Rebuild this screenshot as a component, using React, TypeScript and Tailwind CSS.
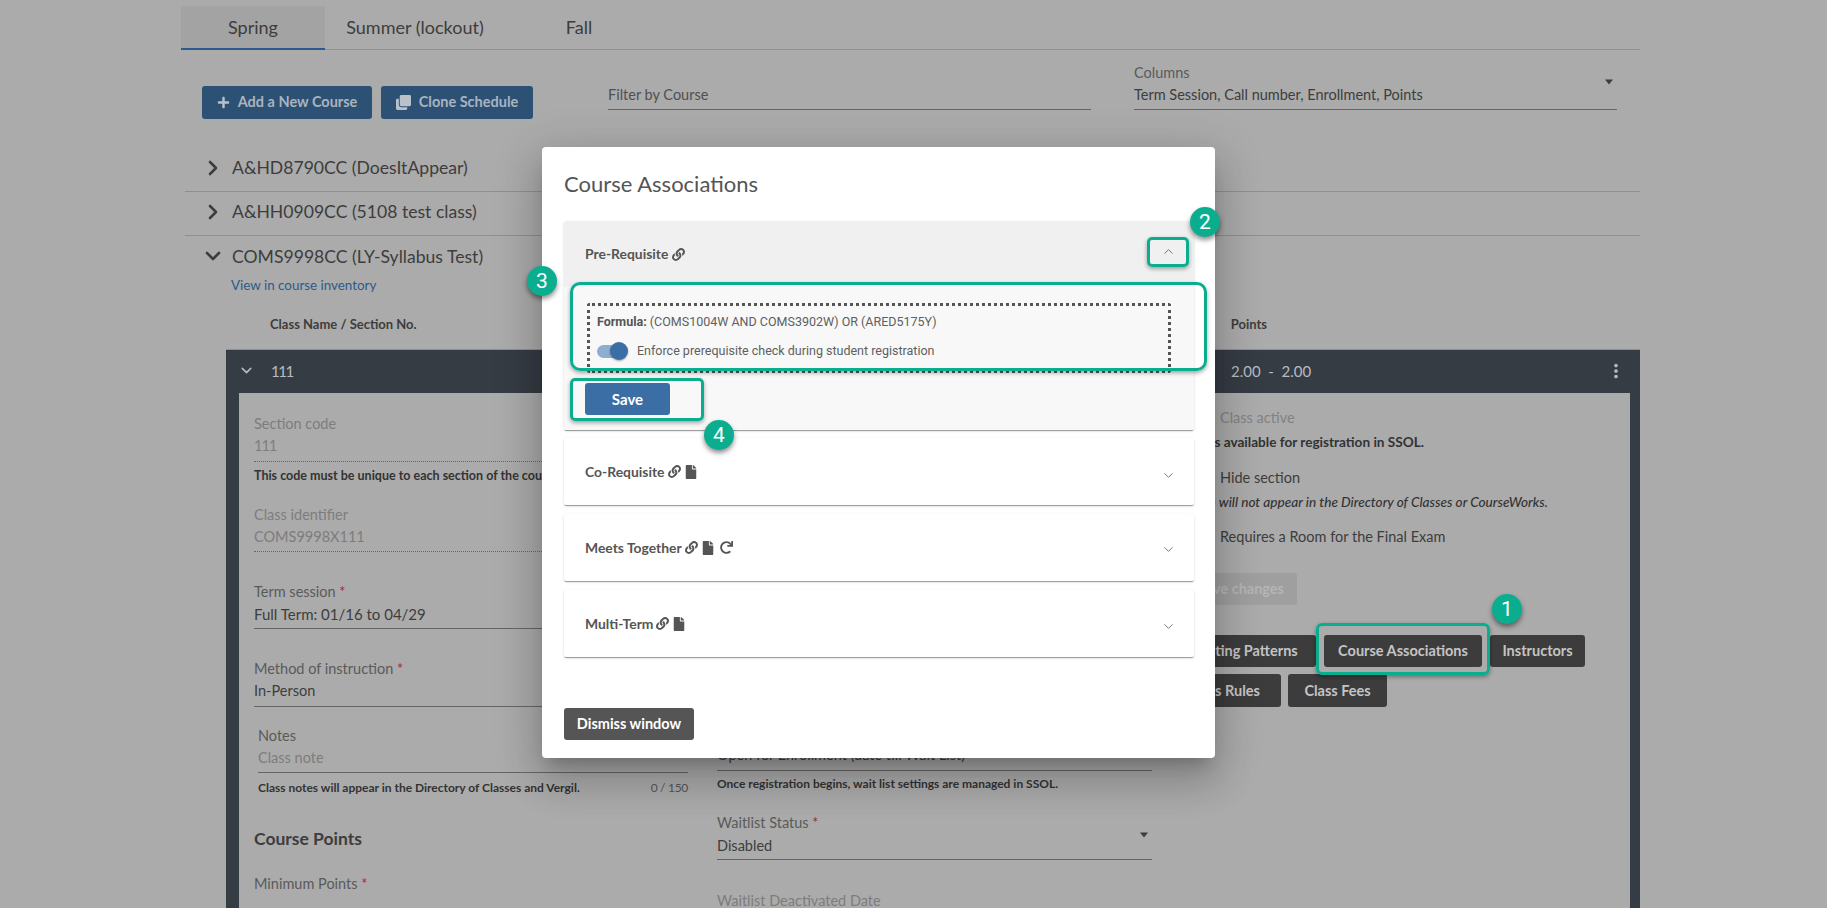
import React from "react";
import { ChevronDown, ChevronRight, ChevronUp } from "lucide-react";
import { FaClone, FaFile, FaLink, FaPlus, FaRedo } from "react-icons/fa";
import { MdMoreVert } from "react-icons/md";

const Req = () => <span className="text-[#a32a2a]"> *</span>;

function Caret() {
  return (
    <svg width="10" height="6" viewBox="0 0 10 6" className="shrink-0">
      <path d="M1 0.5h8L5 5.5z" fill="#3c3c3c" />
    </svg>
  );
}

function Associated({ label, icons, chevronClass }: { label: string; icons: React.ReactNode; chevronClass: string }) {
  return (
    <div className="h-[67px] bg-white rounded-[2px] shadow-[0_2px_1px_-1px_rgba(0,0,0,.25),0_1px_1px_0_rgba(0,0,0,.14),0_1px_3px_0_rgba(0,0,0,.12)] flex items-center justify-between pl-[21px] pr-[18px]">
      <div className="flex items-center gap-[3px] text-[13.9px] leading-[20px] font-bold text-[#555]">
        <span>{label}</span>
        {icons}
      </div>
      <ChevronDown size={15} strokeWidth={1.4} className={`text-[#666] ${chevronClass}`} />
    </div>
  );
}

const LinkI = () => <FaLink size={13} className="text-[#555]" />;
const FileI = () => <FaFile size={14} className="text-[#555]" />;

function Badge({ n, pos }: { n: string; pos: string }) {
  return (
    <div className={`absolute ${pos} w-[30px] h-[30px] rounded-full bg-[#0aae8f] text-white flex items-center justify-center font-[Roboto,sans-serif] text-[21px] shadow-[0_3px_5px_rgba(0,0,0,.45)]`}>
      {n}
    </div>
  );
}

function Mark({ pos }: { pos: string }) {
  return <div className={`absolute ${pos} border-[3px] border-[#0aae8f] shadow-[0_2px_4px_rgba(0,0,0,.35)] pointer-events-none`} />;
}

export default function App() {
  return (
    <div className="relative h-[908px] w-full overflow-hidden bg-[#ababab] font-[Lato,sans-serif] text-[14.5px] leading-[22px] text-[#3d3d3d]">
      <div className="ml-[181px] w-[1459px]">
        {/* tabs */}
        <div className="flex h-[50px] items-end border-b border-[#8f8f8f] text-[18px] text-[#3d3d3d]">
          <div className="flex h-[44px] w-[144px] items-center justify-center border-b-2 border-[#2d5a8c] bg-[#a3a3a3] -mb-px">Spring</div>
          <div className="flex h-[44px] w-[180px] items-center justify-center">Summer (lockout)</div>
          <div className="flex h-[44px] w-[148px] items-center justify-center">Fall</div>
        </div>

        {/* toolbar */}
        <div className="flex h-[97px] items-start pl-[21px]">
          <button className="mt-[36px] flex h-[33px] w-[170px] items-center justify-center gap-[8px] rounded-[3px] bg-[#2c5175] pb-[1px] text-[14.5px] font-bold text-[#a9b4bf]">
            <FaPlus size={13} className="text-[#b9c2cb]" />
            Add a New Course
          </button>
          <button className="ml-[9px] mt-[36px] flex h-[33px] w-[152px] items-center justify-center gap-[8px] rounded-[3px] bg-[#2c5175] pb-[1px] text-[14.5px] font-bold text-[#a9b4bf]">
            <FaClone size={15} className="text-[#b9c2cb]" />
            Clone Schedule
          </button>
          <div className="ml-[75px] mt-[34px] h-[26px] w-[483px] border-b border-[#666] text-[#505050]">Filter by Course</div>
          <div className="ml-[43px] mt-[12px] h-[48px] w-[483px] border-b border-[#666]">
            <div className="text-[#5a5a5a]">Columns</div>
            <div className="flex items-start justify-between pr-[3px]">
              <span className="text-[#3d3d3d]">Term Session, Call number, Enrollment, Points</span>
              <span className="-mt-[5px]"><Caret /></span>
            </div>
          </div>
        </div>

        {/* course rows */}
        <div className="ml-[4px] flex h-[45px] items-center border-b border-[#8f8f8f] pb-[2px] pl-[17px]">
          <ChevronRight size={24} strokeWidth={2.6} className="-ml-[1px] text-[#3d3d3d]" />
          <span className="ml-[7px] text-[17.6px]">A&amp;HD8790CC (DoesItAppear)</span>
        </div>
        <div className="ml-[4px] flex h-[44px] items-center border-b border-[#8f8f8f] pb-[3px] pl-[17px]">
          <ChevronRight size={24} strokeWidth={2.6} className="-ml-[1px] text-[#3d3d3d]" />
          <span className="ml-[7px] text-[17.6px]">A&amp;HH0909CC (5108 test class)</span>
        </div>
        <div className="ml-[4px] flex h-[39px] items-center pt-[2px] pl-[17px]">
          <ChevronDown size={24} strokeWidth={2.6} className="-ml-[1px] -mt-[2px] text-[#3d3d3d]" />
          <span className="ml-[7px] text-[17.6px]">COMS9998CC (LY-Syllabus Test)</span>
        </div>
        <div className="ml-[50px] text-[13.4px] leading-[20px] text-[#2c5a8c]">View in course inventory</div>

        {/* table heading */}
        <div className="mt-[19px] flex h-[20px] items-center text-[13px] font-bold text-[#3d3d3d]">
          <span className="ml-[89px]">Class Name / Section No.</span>
          <span className="ml-auto mr-[373px]">Points</span>
        </div>

        {/* section card */}
        <div className="ml-[45px] mt-[15px] w-[1414px]">
          <div className="flex h-[44px] items-center border-t border-[#8f8f8f] bg-[#363c44] pb-[2px] pl-[12px] text-[#b7bbc0]">
            <ChevronDown size={17} strokeWidth={2.2} className="text-[#b7bbc0]" />
            <span className="ml-[16px] w-[24px] text-[15px] tracking-[-1.5px]">111</span>
            <span className="ml-[936px] text-[15px]">2.00&nbsp; - &nbsp;2.00</span>
            <MdMoreVert size={22} className="ml-auto mr-[13px] text-[#b7bbc0]" />
          </div>

          <div className="flex h-[520px] border-l-[13px] border-r-[10px] border-[#363c44]">
            {/* left column */}
            <div className="w-[478px] shrink-0 pl-[15px] pr-[29px]">
              <div className="mt-[20px] text-[#7d7d7d]">Section code</div>
              <div className="tracking-[-1px] text-[#7d7d7d]">111</div>
              <div className="mt-[4px] border-b border-dotted border-[#666]" />
              <div className="mt-[4px] whitespace-nowrap text-[12.5px] leading-[20px] font-bold text-[#333]">This code must be unique to each section of the course.</div>

              <div className="mt-[18px] text-[#7d7d7d]">Class identifier</div>
              <div className="text-[#7d7d7d]">COMS9998X111</div>
              <div className="mt-[3px] border-b border-dotted border-[#666]" />

              <div className="mt-[29px] text-[#5a5a5a]">Term session<Req /></div>
              <div className="text-[15px]">Full Term: 01/16 to 04/29</div>
              <div className="mt-[3px] border-b border-[#666]" />

              <div className="mt-[29px] text-[#5a5a5a]">Method of instruction<Req /></div>
              <div>In-Person</div>
              <div className="mt-[4px] border-b border-[#666]" />

              <div className="pl-[4px]">
                <div className="mt-[18px] text-[#5a5a5a]">Notes</div>
                <div className="text-[#7d7d7d]">Class note</div>
                <div className="mt-[3px] border-b border-[#666]" />
                <div className="mt-[5px] flex justify-between text-[12px] leading-[20px]">
                  <span className="font-bold text-[#333]">Class notes will appear in the Directory of Classes and Vergil.</span>
                  <span className="tracking-[-0.3px] text-[#555]">0 / 150</span>
                </div>
              </div>

              <div className="mt-[27px] text-[17.5px] leading-[28px] font-bold text-[#3d3d3d]">Course Points</div>
              <div className="mt-[20px] text-[#5a5a5a]">Minimum Points<Req /></div>
            </div>

            {/* middle column */}
            <div className="w-[435px] shrink-0">
              <div className="mt-[351px] text-[#3d3d3d]">Open for Enrollment (date till Wait List)</div>
              <div className="mt-[4px] border-b border-[#666]" />
              <div className="mt-[3px] text-[12px] leading-[20px] font-bold text-[#333]">Once registration begins, wait list settings are managed in SSOL.</div>
              <div className="mt-[18px] text-[#5a5a5a]">Waitlist Status<Req /></div>
              <div className="mt-[1px] flex items-start justify-between pr-[3px]">
                <span>Disabled</span>
                <span className="-mt-[3px]"><Caret /></span>
              </div>
              <div className="mt-[2px] border-b border-[#666]" />
              <div className="mt-[30px] text-[#7d7d7d]">Waitlist Deactivated Date</div>
            </div>

            {/* right column */}
            <div className="ml-[25px] flex-1 pl-[43px]">
              <div className="mt-[14px] text-[#828282]">Class active</div>
              <div className="mt-[2px] -ml-[200px] w-[404px] whitespace-nowrap text-right text-[13.6px] leading-[22px] font-bold text-[#333]">This section is available for registration in SSOL.</div>
              <div className="mt-[14px] text-[#3d3d3d]">Hide section</div>
              <div className="mt-[2px] -ml-[200px] w-[528px] whitespace-nowrap text-right text-[13.6px] leading-[22px] font-medium italic text-[#333]">This section will not appear in the Directory of Classes or CourseWorks.</div>
              <div className="mt-[13px] text-[#3d3d3d]">Requires a Room for the Final Exam</div>
              <div className="mt-[25px] -ml-[120px] flex h-[32px] w-[197px] items-center justify-end rounded-[3px] bg-[#9f9f9f] pr-[13px] text-[14.5px] font-bold text-[#b5b5b5]">Save changes</div>
              <div className="mt-[30px] -ml-[52px] flex h-[32px] gap-[8px] text-[14.5px] font-bold text-[#c4c4c4]">
                <div className="flex w-[148px] shrink-0 items-center justify-center rounded-[3px] bg-[#3c3c3c]">Meeting Patterns</div>
                <div className="flex w-[158px] shrink-0 items-center justify-center rounded-[3px] bg-[#3c3c3c]">Course Associations</div>
                <div className="flex w-[95px] shrink-0 items-center justify-center rounded-[3px] bg-[#3c3c3c]">Instructors</div>
              </div>
              <div className="mt-[7px] -ml-[53px] flex h-[33px] gap-[7px] text-[14.5px] font-bold text-[#c4c4c4]">
                <div className="flex w-[114px] shrink-0 items-center justify-center rounded-[3px] bg-[#3c3c3c]">Class Rules</div>
                <div className="flex w-[99px] shrink-0 items-center justify-center rounded-[3px] bg-[#3c3c3c]">Class Fees</div>
              </div>
            </div>
          </div>
        </div>
      </div>

      {/* modal */}
      <div className="absolute left-[542px] top-[147px] h-[611px] w-[673px] rounded-[4px] bg-white pl-[22px] pr-[21px] pt-[21px] shadow-[0_11px_15px_-7px_rgba(0,0,0,.2),0_24px_38px_3px_rgba(0,0,0,.14),0_9px_46px_8px_rgba(0,0,0,.12)]">
        <div className="text-[22px] leading-[32px] text-[#555]">Course Associations</div>

        <div className="mt-[21px] overflow-hidden rounded-[2px] shadow-[0_2px_1px_-1px_rgba(0,0,0,.25),0_1px_1px_0_rgba(0,0,0,.14),0_1px_3px_0_rgba(0,0,0,.12)]">
          <div className="flex h-[66px] items-center justify-between bg-[#f0f0f0] pl-[21px] pr-[18px]">
            <div className="flex items-center gap-[4px] text-[13.9px] leading-[20px] font-bold text-[#555]">
              <span>Pre-Requisite</span>
              <LinkI />
            </div>
            <ChevronUp size={15} strokeWidth={1.4} className="-mt-[6px] text-[#666]" />
          </div>
          <div className="h-[143px] bg-[#f8f8f8] pl-[21px] pt-[16px]">
            <div className="ml-[2px] h-[70px] w-[584px] rounded-[3px] border-[3px] border-dotted border-[#555] pl-[7px] pt-[5px] font-[Roboto,sans-serif] text-[12.5px] text-[#5f5f5f]">
              <div className="leading-[22px]"><b className="font-bold text-[#555]">Formula:</b> (COMS1004W AND COMS3902W) OR (ARED5175Y)</div>
              <div className="mt-[8px] flex h-[20px] items-center">
                <span className="flex h-[13px] w-[29px] items-center justify-end rounded-full bg-[#8fadcd]">
                  <span className="-mr-[2px] h-[18px] w-[18px] shrink-0 rounded-full bg-[#3b6ea5] shadow-[0_1px_2px_rgba(0,0,0,.35)]" />
                </span>
                <span className="ml-[11px]">Enforce prerequisite check during student registration</span>
              </div>
            </div>
            <button className="mt-[10px] h-[32px] w-[85px] rounded-[3px] bg-[#3b6ea5] text-[15px] font-bold text-white">Save</button>
          </div>
        </div>

        <div className="mt-[8px]">
          <Associated label="Co-Requisite" chevronClass="mt-[8px]" icons={<><LinkI /><FileI /></>} />
        </div>
        <div className="mt-[9px]">
          <Associated label="Meets Together" chevronClass="mt-[3px]" icons={<><LinkI /><FileI /><FaRedo size={13} className="ml-[2px] text-[#555]" /></>} />
        </div>
        <div className="mt-[9px]">
          <Associated label="Multi-Term" chevronClass="mt-[5px]" icons={<><LinkI /><FileI /></>} />
        </div>

        <button className="mt-[51px] h-[32px] w-[130px] rounded-[3px] bg-[#555] text-[14.5px] font-bold text-white">Dismiss window</button>
      </div>

      {/* annotations */}
      <Mark pos="left-[1316px] top-[623px] h-[52px] w-[174px] rounded-[6px]" />
      <Mark pos="left-[1147px] top-[237px] h-[30px] w-[42px] rounded-[5px]" />
      <Mark pos="left-[570px] top-[282px] h-[89px] w-[637px] rounded-[10px]" />
      <Mark pos="left-[570px] top-[378px] h-[43px] w-[134px] rounded-[5px]" />
      <Badge n="1" pos="left-[1492px] top-[594px]" />
      <Badge n="2" pos="left-[1190px] top-[207px]" />
      <Badge n="3" pos="left-[527px] top-[266px]" />
      <Badge n="4" pos="left-[704px] top-[420px]" />
    </div>
  );
}
